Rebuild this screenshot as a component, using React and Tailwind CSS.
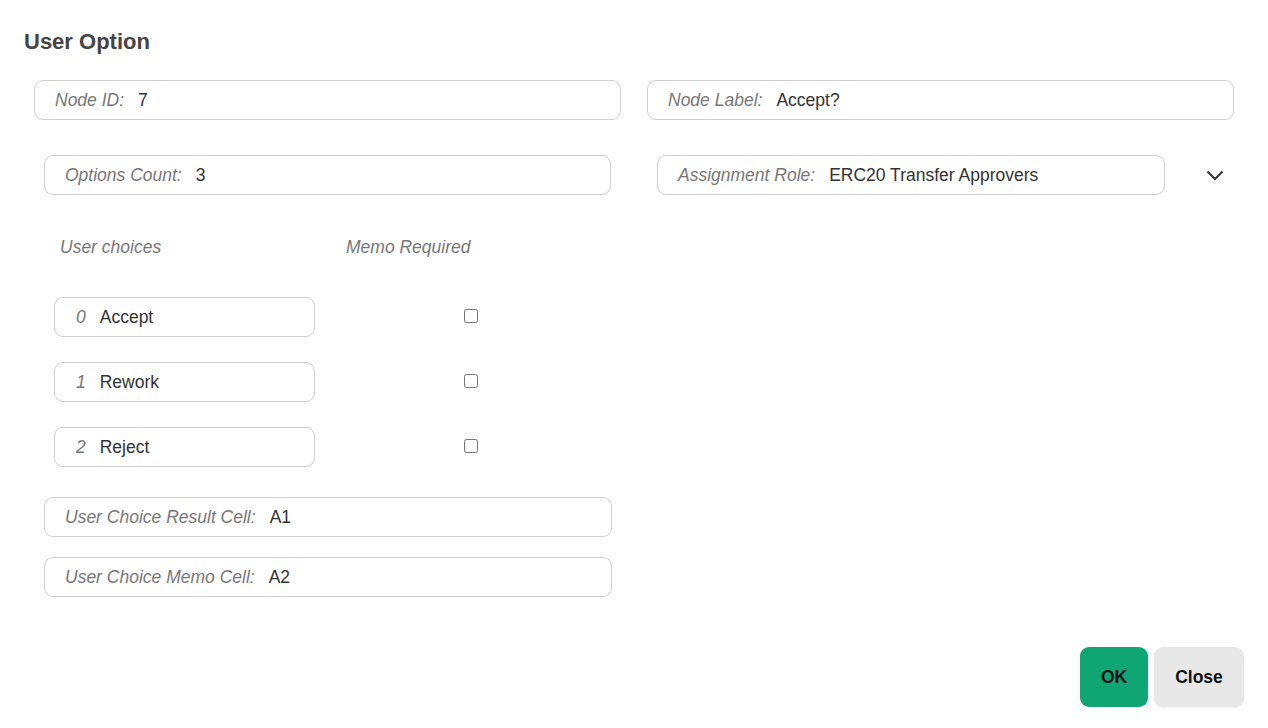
import React from 'react';

function Field({ label, value, className = '' }) {
  return (
    <div className={`h-[40px] flex items-center rounded-[9px] border border-[#cfcfcf] pl-[20px] bg-white ${className}`}>
      <span className="italic text-[#777]">{label}</span>
      <span className="ml-[14px] text-[#333]">{value}</span>
    </div>
  );
}

export default function App() {
  const choices = ['Accept', 'Rework', 'Reject'];

  return (
    <div className="w-[1268px] h-[728px] bg-white px-[24px] pt-[29px] text-[17.5px] font-['Liberation_Sans',Arial,sans-serif]">
      <h2 className="text-[22px] leading-[26px] font-bold text-[#444]">User Option</h2>

      <div className="px-[10px]">
        <div className="mt-[25px] grid grid-cols-2 gap-[26px]">
          <Field label="Node ID:" value="7" />
          <Field label="Node Label:" value="Accept?" />
        </div>

        <div className="mt-[35px] grid grid-cols-2 gap-[26px]">
          <div className="px-[10px]">
            <Field label="Options Count:" value="3" />
          </div>
          <div className="pl-[10px] flex items-center">
            <Field label="Assignment Role:" value="ERC20 Transfer Approvers" className="w-[508px]" />
            <svg className="ml-[41px]" width="18" height="11" viewBox="0 0 18 11" fill="none">
              <path d="M1.5 1.5 L9 9 L16.5 1.5" stroke="#333" strokeWidth="2" />
            </svg>
          </div>
        </div>

        {/* choices */}
        <div className="mt-[42px] flex italic text-[#777] leading-[20px]">
          <span className="ml-[26px] w-[286px]">User choices</span>
          <span>Memo Required</span>
        </div>

        <div className="mt-[40px] flex flex-col gap-[25px]">
          {choices.map((c, i) => (
            <div key={c} className="flex items-center">
              <div className="ml-[20px] w-[261px] h-[40px] flex items-center rounded-[9px] border border-[#cfcfcf] pl-[21px]">
                <span className="italic text-[#777]">{i}</span>
                <span className="ml-[14px] text-[#333]">{c}</span>
              </div>
              <input type="checkbox" className="ml-[149px] w-[14px] h-[14px] m-0 -translate-y-[1px]" />
            </div>
          ))}
        </div>

        <div className="mt-[30px] w-[568px] ml-[10px] flex flex-col gap-[20px]">
          <Field label="User Choice Result Cell:" value="A1" />
          <Field label="User Choice Memo Cell:" value="A2" />
        </div>
      </div>

      <div className="mt-[50px] flex justify-end gap-[6px]">
        <button className="w-[68px] h-[60px] rounded-[9px] bg-[#0fa674] font-bold text-[#111]">OK</button>
        <button className="w-[90px] h-[60px] rounded-[9px] bg-[#e8e8e8] font-bold text-[#111] shadow-[0_1px_2px_rgba(0,0,0,0.08)]">Close</button>
      </div>
    </div>
  );
}
